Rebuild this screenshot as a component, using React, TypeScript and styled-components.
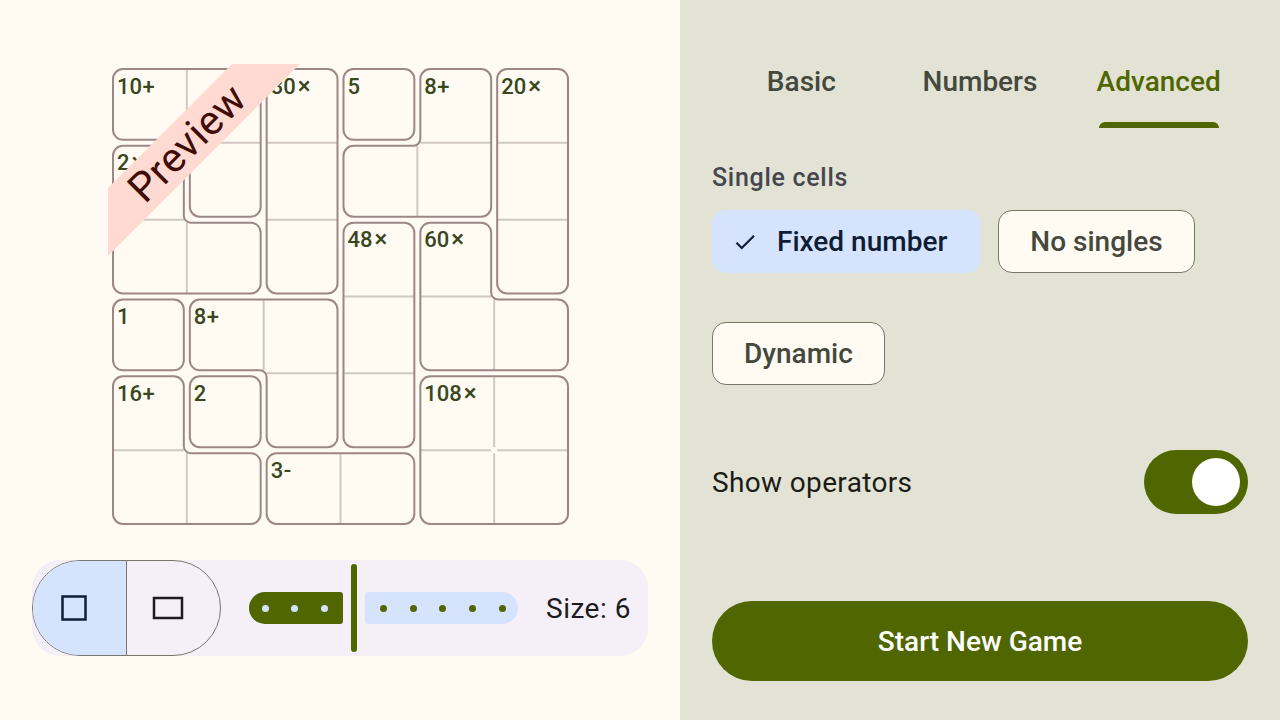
import React from 'react';
import styled, { createGlobalStyle } from 'styled-components';

const GlobalStyle = createGlobalStyle`
  html, body { margin: 0; padding: 0; }
  body { font-family: Roboto, "Noto Sans", Arial, sans-serif; }
  * { box-sizing: border-box; }
`;

const GREEN = '#506600';
const LIGHT_BLUE = '#d5e3fc';

/* ---------- layout ---------- */
const Screen = styled.div`
  display: grid;
  grid-template-columns: 680px 600px;
  width: 1280px;
  height: 720px;
  overflow: hidden;
`;

const LeftPane = styled.section`
  background: #fffbf3;
  display: flex;
  flex-direction: column;
  align-items: center;
  padding-top: 64px;
`;

const RightPane = styled.section`
  background: #e2e3d4;
  display: flex;
  flex-direction: column;
  padding: 34px 32px 0;
`;

/* ---------- board ---------- */
const Board = styled.div`
  position: relative;
  width: 465px;
  height: 465px;
  overflow: hidden;
`;

const BoardSvg = styled.svg`
  display: block;
`;

const CageOutline = styled.path`
  fill: none;
  stroke: #9b8886;
  stroke-width: 2;
`;

const InnerLine = styled.line`
  stroke: #d1c8c3;
  stroke-width: 2;
`;

const CageLabel = styled.text`
  font-family: Roboto, "Noto Sans", sans-serif;
  font-size: 22px;
  font-weight: 500;
  fill: #38471f;
`;

const OpMark = styled.tspan<{ $big?: boolean }>`
  font-size: ${(p) => (p.$big ? '24px' : '22px')};
`;

const Ribbon = styled.div`
  position: absolute;
  left: -71px;
  top: 55px;
  width: 300px;
  height: 48px;
  background: #ffdad2;
  color: #3f0c07;
  transform: rotate(-45deg);
  display: flex;
  align-items: center;
  justify-content: center;
  font-size: 41px;
  line-height: 1;
  letter-spacing: 0.5px;
`;

/* ---------- toolbar ---------- */
const Toolbar = styled.div`
  margin-top: 31px;
  width: 616px;
  height: 96px;
  background: #f5f0f7;
  border-radius: 28px;
  display: flex;
  align-items: center;
`;

const Segmented = styled.div`
  display: flex;
  width: 189px;
  height: 96px;
  border: 1.5px solid #76776f;
  border-radius: 48px;
  overflow: hidden;
`;

const Segment = styled.button<{ $selected?: boolean }>`
  flex: 1;
  display: flex;
  align-items: center;
  justify-content: center;
  padding: 0 12px 0 0;
  border: none;
  background: ${(p) => (p.$selected ? LIGHT_BLUE : 'transparent')};
  & + & {
    border-left: 1.5px solid #76776f;
  }
`;

const Slider = styled.div`
  margin-left: 28px;
  width: 269px;
  height: 88px;
  display: flex;
  align-items: center;
`;

const ActiveTrack = styled.div<{ $w: number }>`
  width: ${(p) => p.$w}px;
  height: 32px;
  background: ${GREEN};
  border-radius: 16px 3px 3px 16px;
  display: flex;
  align-items: center;
  padding-left: 12.5px;
  gap: 22.6px;
`;

const InactiveTrack = styled.div`
  flex: 1;
  height: 32px;
  background: ${LIGHT_BLUE};
  border-radius: 3px 16px 16px 3px;
  display: flex;
  align-items: center;
  justify-content: flex-end;
  padding-right: 12.5px;
  gap: 22.6px;
`;

const Stop = styled.span<{ $on?: boolean }>`
  width: 7px;
  height: 7px;
  border-radius: 50%;
  background: ${(p) => (p.$on ? LIGHT_BLUE : GREEN)};
  flex: none;
`;

const Handle = styled.div`
  width: 6px;
  height: 88px;
  margin: 0 8px;
  border-radius: 3px;
  background: ${GREEN};
  flex: none;
`;

const SizeLabel = styled.span`
  margin-left: 28px;
  font-size: 28px;
  letter-spacing: 0.5px;
  color: #1c1b1f;
`;

/* ---------- right pane ---------- */
const TabBar = styled.div`
  display: grid;
  grid-template-columns: repeat(3, 1fr);
  height: 94px;
`;

const Tab = styled.div<{ $active?: boolean }>`
  display: flex;
  flex-direction: column;
  align-items: center;
  color: ${(p) => (p.$active ? GREEN : '#45483d')};
  font-size: 28px;
  font-weight: 500;
`;

const TabText = styled.span`
  flex: 1;
  display: flex;
  align-items: center;
  padding-top: 6px;
`;

const Indicator = styled.span<{ $show?: boolean }>`
  width: 120px;
  height: 6px;
  border-radius: 6px 6px 0 0;
  background: ${(p) => (p.$show ? GREEN : 'transparent')};
`;

const SectionLabel = styled.div`
  margin-top: 34px;
  font-size: 25px;
  line-height: 32px;
  font-weight: 500;
  color: #46464f;
  letter-spacing: 0.7px;
`;

const ChipGroup = styled.div`
  margin-top: 16px;
  display: flex;
  flex-wrap: wrap;
  column-gap: 17px;
  row-gap: 49px;
  width: 500px;
`;

const Chip = styled.button<{ $selected?: boolean }>`
  height: 63px;
  display: flex;
  align-items: center;
  gap: 19px;
  padding: ${(p) => (p.$selected ? '0 34px 0 20px' : '0 31px')};
  border-radius: 14px;
  border: ${(p) => (p.$selected ? 'none' : '1.5px solid #75776c')};
  background: ${(p) => (p.$selected ? LIGHT_BLUE : '#fffbf3')};
  color: ${(p) => (p.$selected ? '#0e1d35' : '#45483d')};
  font-family: Roboto, sans-serif;
  font-size: 28px;
  font-weight: 500;
`;

const SwitchRow = styled.div`
  margin-top: 65px;
  display: flex;
  align-items: center;
  justify-content: space-between;
  font-size: 28px;
  letter-spacing: 0.35px;
  color: #1b1c17;
`;

const SwitchTrack = styled.div`
  width: 104px;
  height: 64px;
  border-radius: 32px;
  background: ${GREEN};
  display: flex;
  align-items: center;
  justify-content: flex-end;
  padding-right: 8px;
`;

const SwitchThumb = styled.span`
  width: 48px;
  height: 48px;
  border-radius: 50%;
  background: #ffffff;
`;

const PrimaryButton = styled.button`
  margin-top: 87px;
  height: 80px;
  border: none;
  border-radius: 40px;
  background: ${GREEN};
  color: #ffffff;
  font-family: Roboto, sans-serif;
  font-size: 28px;
  font-weight: 500;
`;

/* ---------- puzzle data ---------- */
type Cage = { value: string; op: string; cells: [number, number][] };

const CAGES: Cage[] = [
  { value: '10', op: '+', cells: [[0, 0], [0, 1], [1, 1]] },
  { value: '2', op: '×', cells: [[1, 0], [2, 0], [2, 1]] },
  { value: '30', op: '×', cells: [[0, 2], [1, 2], [2, 2]] },
  { value: '5', op: '', cells: [[0, 3]] },
  { value: '8', op: '+', cells: [[0, 4], [1, 3], [1, 4]] },
  { value: '20', op: '×', cells: [[0, 5], [1, 5], [2, 5]] },
  { value: '48', op: '×', cells: [[2, 3], [3, 3], [4, 3]] },
  { value: '60', op: '×', cells: [[2, 4], [3, 4], [3, 5]] },
  { value: '1', op: '', cells: [[3, 0]] },
  { value: '8', op: '+', cells: [[3, 1], [3, 2], [4, 2]] },
  { value: '16', op: '+', cells: [[4, 0], [5, 0], [5, 1]] },
  { value: '2', op: '', cells: [[4, 1]] },
  { value: '3', op: '-', cells: [[5, 2], [5, 3]] },
  { value: '108', op: '×', cells: [[4, 4], [4, 5], [5, 4], [5, 5]] },
];

const O = 2;
const S = 461 / 6;
const D = 3;

const sign = (v: number) => (v > 0 ? 1 : v < 0 ? -1 : 0);

function cagePath(cells: [number, number][]): string {
  const set = new Set(cells.map(([r, c]) => `${r},${c}`));
  const has = (r: number, c: number) => set.has(`${r},${c}`);
  const edges = new Map<string, [number, number]>();
  for (const [r, c] of cells) {
    if (!has(r - 1, c)) edges.set(`${c},${r}`, [c + 1, r]);
    if (!has(r, c + 1)) edges.set(`${c + 1},${r}`, [c + 1, r + 1]);
    if (!has(r + 1, c)) edges.set(`${c + 1},${r + 1}`, [c, r + 1]);
    if (!has(r, c - 1)) edges.set(`${c},${r + 1}`, [c, r]);
  }
  const startKey = edges.keys().next().value as string;
  const pts: [number, number][] = [];
  let key = startKey;
  do {
    const [x, y] = key.split(',').map(Number);
    pts.push([x, y]);
    const nx = edges.get(key)!;
    key = `${nx[0]},${nx[1]}`;
  } while (key !== startKey);
  const n = pts.length;
  const corners = pts.filter((p, i) => {
    const a = pts[(i - 1 + n) % n];
    const b = pts[(i + 1) % n];
    return !((a[0] === p[0] && p[0] === b[0]) || (a[1] === p[1] && p[1] === b[1]));
  });
  const m = corners.length;
  let d = '';
  corners.forEach((p, i) => {
    const a = corners[(i - 1 + m) % m];
    const b = corners[(i + 1) % m];
    const din = [sign(p[0] - a[0]), sign(p[1] - a[1])];
    const dout = [sign(b[0] - p[0]), sign(b[1] - p[1])];
    const convex = din[0] * dout[1] - din[1] * dout[0] > 0;
    const rad = convex ? 10 : 7;
    const x = O + p[0] * S + D * (-din[1] - dout[1]);
    const y = O + p[1] * S + D * (din[0] + dout[0]);
    const ax = x - din[0] * rad;
    const ay = y - din[1] * rad;
    const bx = x + dout[0] * rad;
    const by = y + dout[1] * rad;
    d += `${i === 0 ? 'M' : 'L'}${ax.toFixed(2)},${ay.toFixed(2)}A${rad},${rad} 0 0 ${convex ? 1 : 0} ${bx.toFixed(2)},${by.toFixed(2)}`;
  });
  return d + 'Z';
}

function innerLines(cells: [number, number][]) {
  const set = new Set(cells.map(([r, c]) => `${r},${c}`));
  const lines: { x1: number; y1: number; x2: number; y2: number }[] = [];
  for (const [r, c] of cells) {
    if (set.has(`${r},${c + 1}`)) {
      const x = O + (c + 1) * S;
      lines.push({ x1: x, y1: O + r * S + D, x2: x, y2: O + (r + 1) * S - D });
    }
    if (set.has(`${r + 1},${c}`)) {
      const y = O + (r + 1) * S;
      lines.push({ x1: O + c * S + D, y1: y, x2: O + (c + 1) * S - D, y2: y });
    }
  }
  return lines;
}

const PuzzleBoard: React.FC = () => (
  <Board>
    <BoardSvg width={465} height={465} viewBox="0 0 465 465">
      {CAGES.map((cage, i) => (
        <g key={i}>
          {innerLines(cage.cells).map((l, j) => (
            <InnerLine key={j} {...l} />
          ))}
          <CageOutline d={cagePath(cage.cells)} />
        </g>
      ))}
      {CAGES.map((cage, i) => {
        const [r, c] = [...cage.cells].sort((a, b) => a[0] - b[0] || a[1] - b[1])[0];
        return (
          <CageLabel key={i} x={O + c * S + 7} y={O + r * S + 27.5}>
            {cage.value}
            {cage.op && (
              <OpMark $big={cage.op === '×'} dx={cage.op === '×' ? 2 : 0.5}>
                {cage.op}
              </OpMark>
            )}
          </CageLabel>
        );
      })}
    </BoardSvg>
    <Ribbon>Preview</Ribbon>
  </Board>
);

const SquareIcon = () => (
  <svg width="28" height="28" viewBox="0 0 28 28">
    <rect x="2.5" y="2.5" width="23" height="23" fill="none" stroke="#0e1d35" strokeWidth="2.5" />
  </svg>
);

const RectIcon = () => (
  <svg width="32" height="24" viewBox="0 0 32 24">
    <rect x="2" y="2" width="28" height="20" fill="none" stroke="#1c1b1f" strokeWidth="2.5" />
  </svg>
);

const CheckIcon = () => (
  <svg width="26" height="26" viewBox="0 0 24 24">
    <path d="M9 16.17L4.83 12l-1.42 1.41L9 19 21 7l-1.41-1.41z" fill="#0e1d35" />
  </svg>
);

const MIN = 3;
const MAX = 11;
const VALUE = 6;

const SizeSlider: React.FC = () => {
  const step = (269 - 32) / (MAX - MIN);
  const handleCenter = 16 + (VALUE - MIN) * step;
  const activeW = handleCenter - 3 - 8;
  const before = Array.from({ length: VALUE - MIN });
  const after = Array.from({ length: MAX - VALUE });
  return (
    <Slider>
      <ActiveTrack $w={activeW}>
        {before.map((_, i) => (
          <Stop key={i} $on />
        ))}
      </ActiveTrack>
      <Handle />
      <InactiveTrack>
        {after.map((_, i) => (
          <Stop key={i} />
        ))}
      </InactiveTrack>
    </Slider>
  );
};

export default function App() {
  return (
    <>
      <GlobalStyle />
      <Screen>
        <LeftPane>
          <PuzzleBoard />
          <Toolbar>
            <Segmented>
              <Segment $selected>
                <SquareIcon />
              </Segment>
              <Segment>
                <RectIcon />
              </Segment>
            </Segmented>
            <SizeSlider />
            <SizeLabel>Size: {VALUE}</SizeLabel>
          </Toolbar>
        </LeftPane>
        <RightPane>
          <TabBar>
            <Tab>
              <TabText>Basic</TabText>
              <Indicator />
            </Tab>
            <Tab>
              <TabText>Numbers</TabText>
              <Indicator />
            </Tab>
            <Tab $active>
              <TabText>Advanced</TabText>
              <Indicator $show />
            </Tab>
          </TabBar>
          <SectionLabel>Single cells</SectionLabel>
          <ChipGroup>
            <Chip $selected>
              <CheckIcon />
              Fixed number
            </Chip>
            <Chip>No singles</Chip>
            <Chip>Dynamic</Chip>
          </ChipGroup>
          <SwitchRow>
            <span>Show operators</span>
            <SwitchTrack>
              <SwitchThumb />
            </SwitchTrack>
          </SwitchRow>
          <PrimaryButton>Start New Game</PrimaryButton>
        </RightPane>
      </Screen>
    </>
  );
}
